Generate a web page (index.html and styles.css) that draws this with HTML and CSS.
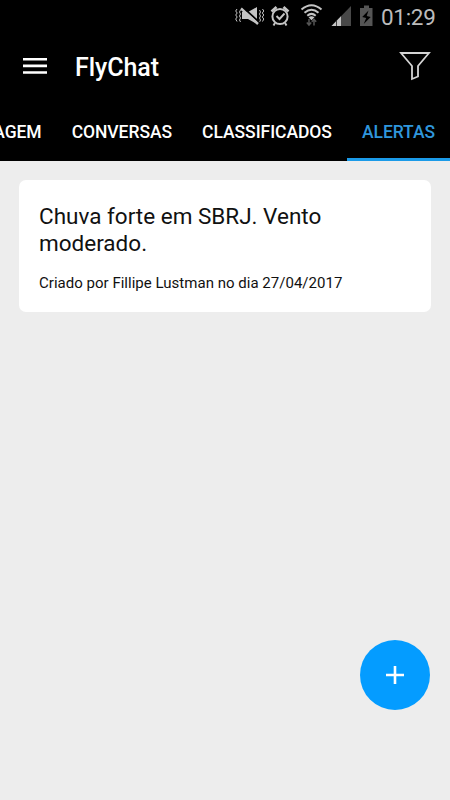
FILE: index.html
```
<!DOCTYPE html>
<html lang="pt-BR">
<head>
    <meta charset="UTF-8">
    <meta name="viewport" content="width=device-width, initial-scale=1.0">
    <title>FlyChat</title>
    <link rel="stylesheet" href="styles.css">
</head>
<body>
    <header class="header">
        <div class="statusbar">
            <svg class="status-icons" width="140" height="33" viewBox="235 0 140 33" fill="none" stroke="#c4c4c4">
                <!-- vibrar / mudo -->
                <path d="M237 9l-1.300 2 1.500 2-1.500 2 1.500 2-1.500 2 1.300 2.500M240.500 10l-1 2 1 2-1 2 1 2-1 2 1 2M259.500 10l1 2-1 2 1 2-1 2 1 2-1 2M262.500 9l1.300 2-1.500 2 1.500 2-1.500 2 1.500 2-1.300 2.500" stroke-width="1"/>
                <path d="M242 12h6l9-5v17l-9-5h-6z" fill="#c4c4c4" stroke="none"/>
                <path d="M243 7.500l16 14.500" stroke="#000" stroke-width="1.800"/>
                <path d="M241 8.500l17 15.500" stroke-width="2.400"/>
                <!-- alarme -->
                <circle cx="280" cy="16.500" r="7.600" stroke-width="2"/>
                <path d="M276.500 16l3 3 5-5.500" stroke-width="1.900"/>
                <path d="M271.500 11.500l5-4.500M288.500 11.500l-5-4.500" stroke-width="2.600"/>
                <path d="M275 23l-1.500 2.500M285 23l1.500 2.500" stroke-width="2"/>
                <!-- wifi -->
                <path d="M301.500 9.500q10-8.500 20 0M304.500 12.700q7-6 14 0M307.300 15.700q4.200-3.600 8.400 0" stroke-width="2"/>
                <path d="M308.500 17.300q3-2 6 0l-3 3z" fill="#c4c4c4" stroke="none"/>
                <path d="M309 19v6M306.800 22.500l2.200 2.500 2.200-2.500M314 25.500v-6M311.800 21.800l2.200-2.500 2.200 2.500" stroke="#555" stroke-width="1.500"/>
                <!-- sinal -->
                <path d="M331.500 26L351 6v20z" fill="#484848" stroke="none"/>
                <path d="M331.500 26L341 16.300V26z" fill="#c4c4c4" stroke="none"/>
                <path d="M336.500 20v6" stroke="#222" stroke-width=".8"/>
                <!-- bateria -->
                <path d="M360 8h4V5.500h5V8h3.500v18H360z" fill="#555" stroke="none"/>
                <path d="M368.500 10.500l-6.300 6.500 4 1-2.500 6 7-7-4-1z" fill="#000" stroke="none"/>
            </svg>
            <span class="clock">01:29</span>
        </div>
        <div class="toolbar">
            <svg class="menu" width="24" height="16" viewBox="0 0 24 16" fill="#fff">
                <path d="M0 0h24v2.600H0zM0 6.600h24v2.600H0zM0 13.200h24v2.600H0z"/>
            </svg>
            <h1 class="title">FlyChat</h1>
            <svg class="filter" width="32" height="30" viewBox="0 0 32 30" fill="none" stroke="#d4d4d4" stroke-width="1.800">
                <path d="M2 2h28L19 15v10.500L13 28V15z"/>
            </svg>
        </div>
        <nav class="tabs">
            <a class="tab">AGEM</a>
            <a class="tab">CONVERSAS</a>
            <a class="tab">CLASSIFICADOS</a>
            <a class="tab active">ALERTAS</a>
        </nav>
    </header>
    <main class="content">
        <div class="card">
            <h2 class="card-title">Chuva forte em SBRJ. Vento moderado.</h2>
            <p class="card-info">Criado por Fillipe Lustman no dia 27/04/2017</p>
        </div>
    </main>
    <button class="fab" aria-label="Novo alerta">
        <svg width="18" height="18" viewBox="0 0 18 18" fill="#fff">
            <path d="M7.700 0h2.600v7.700H18v2.600h-7.700V18H7.700v-7.700H0V7.700h7.700z"/>
        </svg>
    </button>
</body>
</html>
```
FILE: styles.css
```
* {
    box-sizing: border-box;
}
body {
    margin: 0;
    min-height: 800px;
    background-color: #ededed;
    font-family: Roboto, sans-serif;
    overflow: hidden;
}
.header {
    height: 161px;
    background-color: #000;
    color: #fff;
}
.statusbar {
    display: flex;
    justify-content: flex-end;
    height: 33px;
    padding-right: 14px;
}
.clock {
    width: 55px;
    margin-left: 6px;
    font-size: 22.500px;
    letter-spacing: -0.300px;
    line-height: 35px;
    color: #bcbcbc;
    white-space: nowrap;
}
.toolbar {
    display: flex;
    align-items: center;
    height: 66px;
    padding: 0 19px 0 23px;
}
.title {
    margin: 0 auto 0 28px;
    padding-top: 3px;
    font-size: 25px;
    font-weight: 500;
    letter-spacing: -0.050px;
    line-height: 30px;
}
.tabs {
    display: flex;
    justify-content: flex-end;
    height: 62px;
    overflow: hidden;
}
.tab {
    flex: none;
    padding: 0 15px;
    font-size: 17.500px;
    font-weight: 500;
    letter-spacing: -0.050px;
    line-height: 66px;
}
.tab.active {
    color: #2f96dc;
    border-bottom: 3px solid #1b9be8;
}
.content {
    padding: 19px;
}
.card {
    height: 132px;
    padding: 23px 20px;
    background-color: #fff;
    border-radius: 7px;
    color: #111;
}
.card-title {
    max-width: 330px;
    margin: 0 0 16px;
    font-size: 22.500px;
    font-weight: 400;
    line-height: 27px;
}
.card-info {
    margin: 0;
    font-size: 15px;
    letter-spacing: 0.020px;
    line-height: 20px;
}
.fab {
    display: flex;
    align-items: center;
    justify-content: center;
    position: absolute;
    right: 20px;
    bottom: 90px;
    width: 70px;
    height: 70px;
    padding: 0;
    border: none;
    border-radius: 50%;
    background-color: #049cff;
}
```
